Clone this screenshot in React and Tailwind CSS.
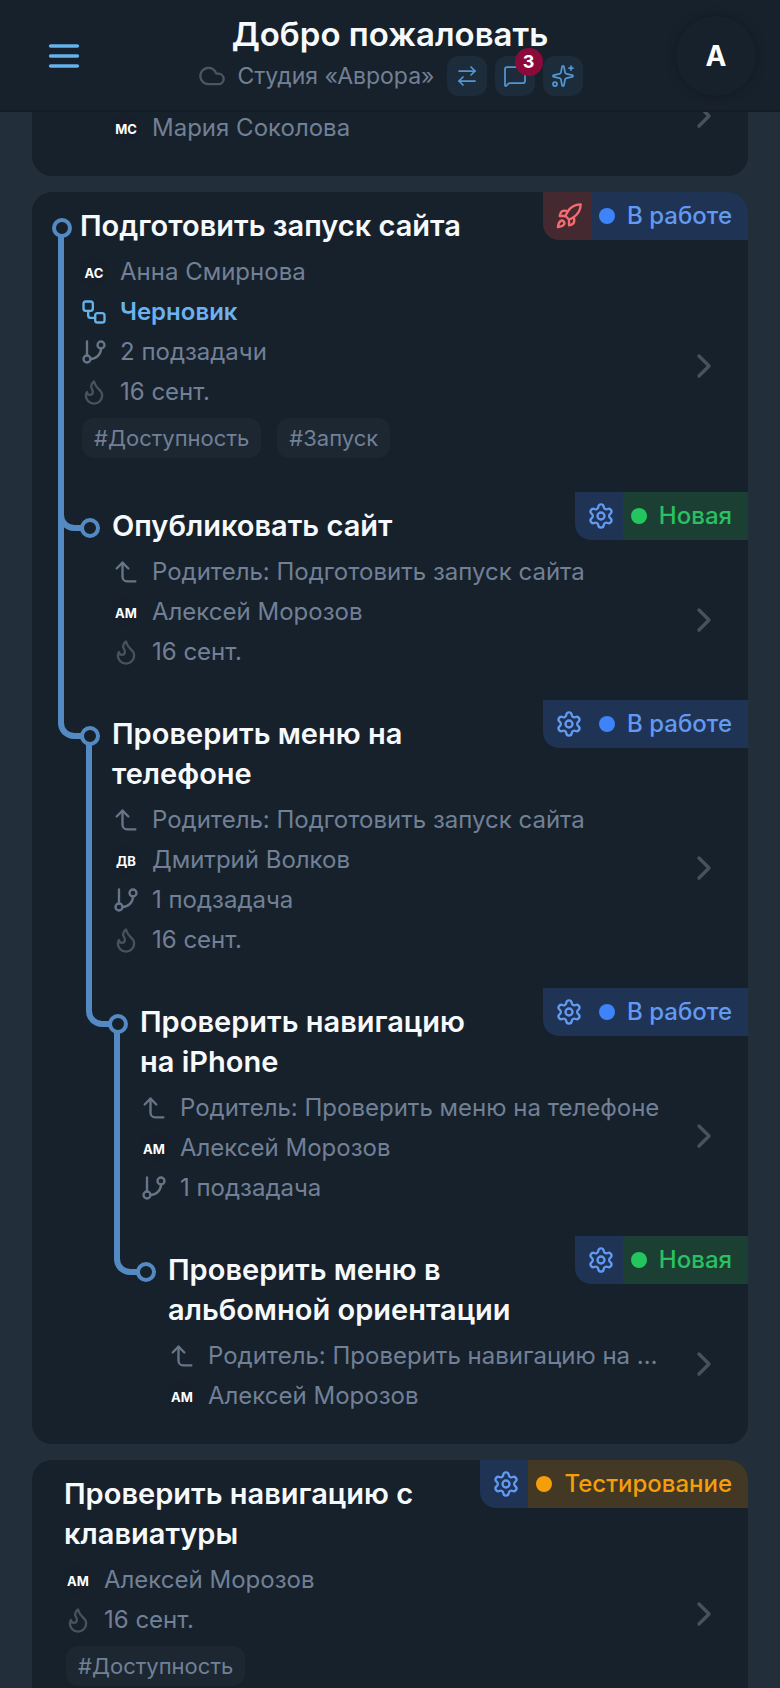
import React from 'react';
import {
  ArrowRightLeft,
  ChevronRight,
  Cloud,
  CornerLeftUp,
  Flame,
  GitBranch,
  MessageSquare,
  Rocket,
  Settings,
  Sparkles,
  Workflow,
} from 'lucide-react';

const STATUSES = {
  progress: {
    label: 'В работе',
    box: 'bg-[#1f3355] text-[#6199f3]',
    dot: 'bg-[#3f83f8]',
    titleSpace: 'pr-40',
  },
  fresh: {
    label: 'Новая',
    box: 'bg-[#1b4033] text-[#29c162]',
    dot: 'bg-[#22c55e]',
    titleSpace: 'pr-[120px]',
  },
  testing: {
    label: 'Тестирование',
    box: 'bg-[#433823] text-[#f59e0b]',
    dot: 'bg-[#f59e0b]',
    titleSpace: 'pr-[200px]',
  },
};

const KINDS = {
  launch: { icon: Rocket, label: 'Запуск', box: 'bg-[#452930] text-[#f66b70]' },
  task: { icon: Settings, label: 'Задача', box: 'bg-[#1f3355] text-[#6199f3]' },
};

// Left padding of the text for every nesting level
const INDENT = {
  none: 'pl-8',
  0: 'pl-12',
  1: 'pl-20',
  2: 'pl-[108px]',
  3: 'pl-[136px]',
};

const NODE_LEFT = { 0: 'left-5', 1: 'left-12', 2: 'left-[76px]', 3: 'left-[104px]' };
const LINE_LEFT = { 0: 'left-[26px]', 1: 'left-[54px]', 2: 'left-[82px]' };

const META_ICONS = {
  parent: { icon: CornerLeftUp, color: 'text-[#667587]' },
  draft: { icon: Workflow, color: 'text-[#63b3ed]' },
  subtasks: { icon: GitBranch, color: 'text-[#667587]' },
  due: { icon: Flame, color: 'text-[#46525e]' },
};

const TREE = [
  {
    title: 'Подготовить запуск сайта',
    status: 'progress',
    kind: 'launch',
    depth: 0,
    hasChildren: true,
    meta: [
      { type: 'person', initials: 'АС', text: 'Анна Смирнова' },
      { type: 'draft', text: 'Черновик' },
      { type: 'subtasks', text: '2 подзадачи' },
      { type: 'due', text: '16 сент.' },
    ],
    tags: ['#Доступность', '#Запуск'],
  },
  {
    title: 'Опубликовать сайт',
    status: 'fresh',
    kind: 'task',
    depth: 1,
    hasSibling: true,
    meta: [
      { type: 'parent', text: 'Родитель: Подготовить запуск сайта' },
      { type: 'person', initials: 'АМ', text: 'Алексей Морозов' },
      { type: 'due', text: '16 сент.' },
    ],
  },
  {
    title: 'Проверить меню на телефоне',
    status: 'progress',
    kind: 'task',
    depth: 1,
    hasChildren: true,
    meta: [
      { type: 'parent', text: 'Родитель: Подготовить запуск сайта' },
      { type: 'person', initials: 'ДВ', text: 'Дмитрий Волков' },
      { type: 'subtasks', text: '1 подзадача' },
      { type: 'due', text: '16 сент.' },
    ],
  },
  {
    title: 'Проверить навигацию на iPhone',
    status: 'progress',
    kind: 'task',
    depth: 2,
    hasChildren: true,
    meta: [
      { type: 'parent', text: 'Родитель: Проверить меню на телефоне' },
      { type: 'person', initials: 'АМ', text: 'Алексей Морозов' },
      { type: 'subtasks', text: '1 подзадача' },
    ],
  },
  {
    title: 'Проверить меню в альбомной ориентации',
    status: 'fresh',
    kind: 'task',
    depth: 3,
    meta: [
      { type: 'parent', text: 'Родитель: Проверить навигацию на iPhone' },
      { type: 'person', initials: 'АМ', text: 'Алексей Морозов' },
    ],
  },
];

const KEYBOARD_TASK = {
  title: 'Проверить навигацию с клавиатуры',
  status: 'testing',
  kind: 'task',
  depth: 'none',
  meta: [
    { type: 'person', initials: 'АМ', text: 'Алексей Морозов' },
    { type: 'due', text: '16 сент.' },
  ],
  tags: ['#Доступность'],
};

const SCROLLED_TASK = {
  depth: 1,
  meta: [{ type: 'person', initials: 'МС', text: 'Мария Соколова' }],
};

const StatusBadge = ({ status, kind }) => {
  const { label, box, dot } = STATUSES[status];
  const { icon: Icon, label: kindLabel, box: kindBox } = KINDS[kind];

  return (
    <div className="absolute top-0 right-0 flex h-12 overflow-hidden rounded-bl-2xl text-2xl font-medium">
      <span className={`flex w-12 items-center justify-center pl-1 ${kindBox}`} title={kindLabel}>
        <Icon size={28} />
      </span>
      <span className={`flex items-center gap-3 pr-4 pl-2 ${box}`}>
        <span className={`size-4 rounded-full ${dot}`} />
        {label}
      </span>
    </div>
  );
};

const TreeLines = ({ depth, hasChildren, hasSibling }) => (
  <>
    {depth > 0 && (
      <span
        className={`absolute top-0 h-[39px] w-6 rounded-bl-2xl border-b-6 border-l-6 border-[#548ac3] ${LINE_LEFT[depth - 1]}`}
      />
    )}
    {hasSibling && (
      <span className={`absolute inset-y-0 w-1.5 bg-[#548ac3] ${LINE_LEFT[depth - 1]}`} />
    )}
    {hasChildren && (
      <span className={`absolute top-11 bottom-0 w-1.5 bg-[#548ac3] ${LINE_LEFT[depth]}`} />
    )}
    <span
      className={`absolute top-[26px] size-5 rounded-full border-4 border-[#548ac3] bg-[#17212b] ${NODE_LEFT[depth]}`}
    />
  </>
);

const MetaRow = ({ type, initials, text }) => {
  const meta = META_ICONS[type];
  const Icon = meta?.icon;

  return (
    <li className="flex h-10 items-center gap-3">
      {type === 'person' ? (
        <span className="flex size-7 shrink-0 items-center justify-center rounded-full bg-[#17202a] pt-1 text-[13px] font-bold text-white">
          {initials}
        </span>
      ) : (
        <Icon size={28} className={`shrink-0 ${meta.color}`} />
      )}
      <span className={`truncate ${type === 'draft' ? 'font-semibold text-[#6cb2f0]' : ''}`}>
        {text}
      </span>
    </li>
  );
};

const Task = ({ title, status, kind, depth, hasChildren, hasSibling, meta, tags }) => (
  <article className={`relative flex min-h-[168px] items-stretch pr-6 ${INDENT[depth]}`}>
    {title && depth !== 'none' && (
      <TreeLines depth={depth} hasChildren={hasChildren} hasSibling={hasSibling} />
    )}
    <div className="flex min-w-0 flex-1 flex-col justify-end pt-3.5 pb-7">
      {title && (
        <h2
          className={`mb-1.5 text-[29px] leading-10 font-semibold text-[#f7fafc] ${STATUSES[status].titleSpace}`}
        >
          {title}
        </h2>
      )}
      <ul className="text-2xl text-[#718096]">
        {meta.map((row) => (
          <MetaRow key={row.text} {...row} />
        ))}
      </ul>
      {tags && (
        <div className="my-1.5 flex gap-4 pl-0.5">
          {tags.map((tag) => (
            <span
              key={tag}
              className="flex h-10 items-center rounded-xl bg-[#1d2732] px-3 text-[22px] text-[#718096]"
            >
              {tag}
            </span>
          ))}
        </div>
      )}
    </div>
    <a
      href="#task"
      aria-label={title || 'Открыть задачу'}
      className="ml-6 flex items-center pt-12 text-[#47525d]"
    >
      <ChevronRight size={40} />
    </a>
    {status && <StatusBadge status={status} kind={kind} />}
  </article>
);

const Card = ({ children }) => (
  <section className="overflow-hidden rounded-[20px] bg-[#17212b]">{children}</section>
);

const IconButton = ({ label, children }) => (
  <button
    type="button"
    aria-label={label}
    className="relative flex size-10 items-center justify-center rounded-xl bg-[#1d2c3a] text-[#5496d3]"
  >
    {children}
  </button>
);

const Header = () => (
  <header className="fixed inset-x-0 top-0 z-10 flex h-28 items-center justify-between border-b-2 border-[#141c25] bg-[#17212b] px-6 pt-0.5">
    <button
      type="button"
      aria-label="Меню"
      className="flex size-20 items-center justify-center text-[#63b3ed]"
    >
      <svg width="40" height="40" viewBox="0 0 24 24" stroke="currentColor" strokeWidth="2.2" strokeLinecap="round">
        <path d="M4 6h16M4 12h16M4 18h16" />
      </svg>
    </button>

    <div className="flex flex-col items-center">
      <h1 className="mb-1 text-[33px] leading-9 font-semibold text-[#f7fafc]">Добро пожаловать</h1>
      <div className="flex items-center gap-3">
        <Cloud size={28} className="text-[#4a5663]" />
        <span className="text-[23px] text-[#718096]">Студия «Аврора»</span>
        <div className="flex gap-2">
          <IconButton label="Сменить студию">
            <ArrowRightLeft size={24} strokeWidth={1.75} />
          </IconButton>
          <IconButton label="Сообщения">
            <MessageSquare size={24} strokeWidth={1.75} />
            <span className="absolute -top-2 -right-2 flex size-7 items-center justify-center rounded-full bg-[#8c0a3a] text-lg font-bold text-white">
              3
            </span>
          </IconButton>
          <IconButton label="Помощник">
            <Sparkles size={24} strokeWidth={1.75} />
          </IconButton>
        </div>
      </div>
    </div>

    <button
      type="button"
      aria-label="Профиль"
      className="flex size-20 items-center justify-center rounded-full bg-[#17212b] text-[28px] font-bold text-white shadow-[0_0_8px_#121a22]"
    >
      А
    </button>
  </header>
);

const App = () => (
  <div className="min-h-screen bg-[#232e3b] font-['Inter','Liberation_Sans',sans-serif]">
    <Header />
    <main className="flex flex-col gap-4 px-8 py-2">
      <Card>
        <Task {...SCROLLED_TASK} />
      </Card>
      <Card>
        {TREE.map((task) => (
          <Task key={task.title} {...task} />
        ))}
      </Card>
      <Card>
        <Task {...KEYBOARD_TASK} />
      </Card>
    </main>
  </div>
);

export default App;
